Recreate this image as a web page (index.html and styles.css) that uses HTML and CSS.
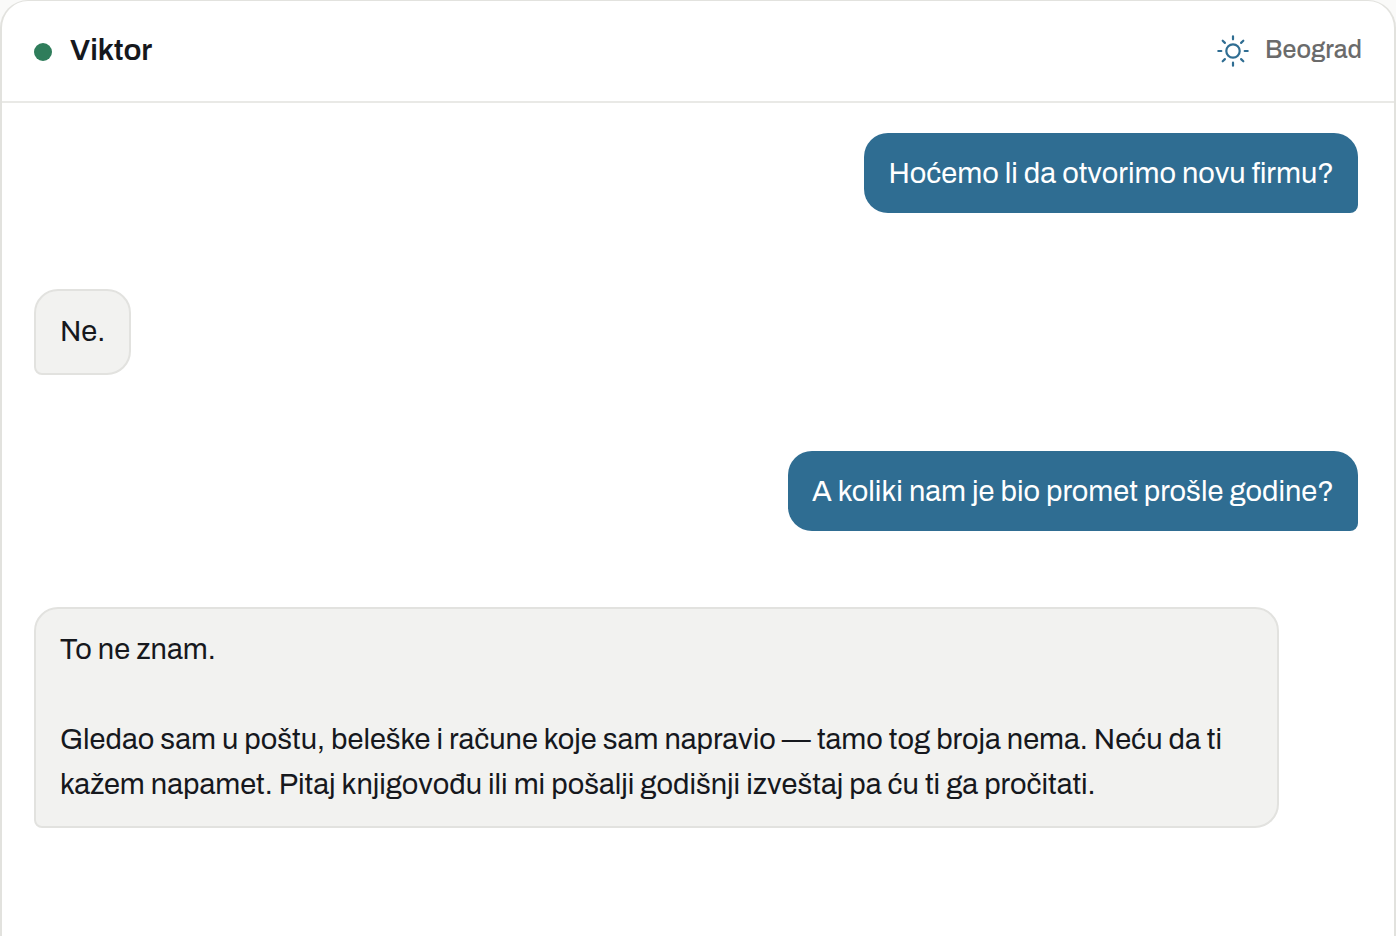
FILE: index.html
```html
<!DOCTYPE html>
<html lang="sr-Latn">
<head>
  <meta charset="UTF-8">
  <meta name="viewport" content="width=device-width, initial-scale=1">
  <title>Viktor</title>
  <link rel="stylesheet" href="styles.css">
</head>
<body>
  <main class="chat">
    <header class="chat-header">
      <span class="status"></span>
      <h1 class="name">Viktor</h1>
      <div class="place">
        <svg class="sun" viewBox="0 0 32 32" aria-hidden="true">
          <circle cx="16" cy="16" r="6.7"/>
          <path d="M16 1.3v3M16 27.7v3M1.3 16h3M27.7 16h3M5.7 5.7l2.2 2.2M24.1 24.1l2.2 2.2M5.7 26.3l2.2-2.2M24.1 7.9l2.2-2.2"/>
        </svg>
        <span>Beograd</span>
      </div>
    </header>

    <div class="messages">
      <div class="bubble user">Hoćemo li da otvorimo novu firmu?</div>
      <div class="bubble bot">Ne.</div>
      <div class="bubble user">A koliki nam je bio promet prošle godine?</div>
      <div class="bubble bot">
        <p>To ne znam.</p>
        <p>Gledao sam u poštu, beleške i račune koje sam napravio — tamo tog broja nema. Neću da ti kažem napamet. Pitaj knjigovođu ili mi pošalji godišnji izveštaj pa ću ti ga pročitati.</p>
      </div>
    </div>
  </main>
</body>
</html>
```

FILE: styles.css
```css
* {
  box-sizing: border-box;
}
body {
  margin: 0;
  background: #fafaf9;
  color: #16181d;
  font-family: Archivo, "Liberation Sans", Arial, sans-serif;
  font-size: 29px;
}
.chat {
  display: flex;
  flex-direction: column;
  min-height: 100vh;
  background: #fff;
  border: 2px solid #e2e2de;
  border-top-width: 1px;
  border-bottom: none;
  border-radius: 28px 28px 0 0;
}
.chat-header {
  display: flex;
  align-items: center;
  padding: 28px 32px 30px;
  border-bottom: 2px solid #e9e9e6;
}
.status {
  width: 18px;
  height: 18px;
  margin-top: 4px;
  border-radius: 50%;
  background: #2f7d5b;
}
.name {
  margin: 0 0 0 18px;
  font-size: 30px;
  line-height: 42px;
  font-weight: 600;
}
.place {
  display: flex;
  align-items: center;
  gap: 16px;
  margin-left: auto;
  color: #6b6b6b;
  font-size: 25px;
  font-weight: 500;
  line-height: 40px;
}
.sun {
  width: 32px;
  height: 32px;
  margin-top: 2px;
  fill: none;
  stroke: #2f6d92;
  stroke-width: 2.2;
  stroke-linecap: round;
}
.messages {
  display: flex;
  flex-direction: column;
  gap: 76px;
  padding: 30px 36px 32px 32px;
}
.bubble {
  max-width: 94%;
  padding: 18px 24px;
  border-radius: 24px;
}
.bubble p {
  margin: 0 0 45px;
}
.bubble p:last-child {
  margin-bottom: 0;
}
.user {
  align-self: flex-end;
  padding: 19px 24px 17px;
  background: #2f6d92;
  color: #fff;
  line-height: 44px;
  border-bottom-right-radius: 8px;
}
.bot {
  align-self: flex-start;
  padding-bottom: 19px;
  background: #f2f2f0;
  border: 2px solid #e2e2df;
  line-height: 45px;
  border-bottom-left-radius: 8px;
}
```
